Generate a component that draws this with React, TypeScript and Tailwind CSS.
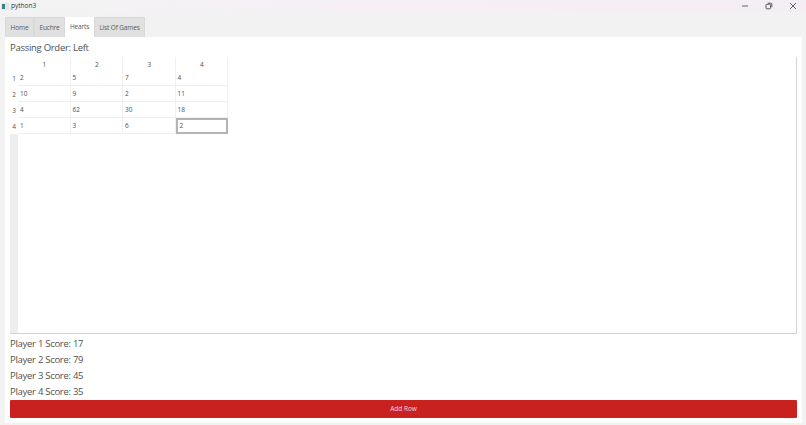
const cols = ["1", "2", "3", "4"];
const rows = [
  ["2", "5", "7", "4"],
  ["10", "9", "2", "11"],
  ["4", "62", "30", "18"],
  ["1", "3", "6", "2"],
];
const scores = [17, 79, 45, 35];
const heights = ["h-[15px]", "h-[16px]", "h-[16px]", "h-[16px]"];

function Tab({ label, active, w }: { label: string; active?: boolean; w: string }) {
  return (
    <div
      className={`${w} h-[20px] flex items-center justify-center text-[6.5px] tracking-[-0.15px] text-[#5a5a5a] ${
        active ? "bg-white" : "bg-[#e0e0e0] border border-b-0 border-[#d9d9d9]"
      }`}
    >
      {label}
    </div>
  );
}

export default function App() {
  return (
    <div className="w-[806px] h-[425px] overflow-hidden flex flex-col bg-[#f2f2f2] font-['Open_Sans','Noto_Sans',sans-serif] text-[#505050]">
      <div className="h-[12px] flex items-center bg-gradient-to-r from-[#f3f3f3] via-[#f6eff6] to-[#f4eef4] relative">
        <svg width="8" height="7" viewBox="0 0 8 7" className="ml-[1px] shrink-0">
          <rect width="8" height="7" fill="#dfe6e6" />
          <rect x="1" y="1" width="3" height="5" fill="#3f7f86" />
        </svg>
        <span className="ml-[2px] text-[6.5px] text-[#333333] leading-none">python3</span>
        <div className="ml-auto flex items-center text-[#555555]">
          <svg width="8" height="8" viewBox="0 0 8 8" className="mr-[16px]">
            <path d="M1 4h6" stroke="currentColor" strokeWidth="0.9" />
          </svg>
          <svg width="8" height="8" viewBox="0 0 8 8" className="mr-[16px]">
            <rect x="1" y="2.2" width="4.6" height="4.6" rx="1" fill="none" stroke="currentColor" strokeWidth="1" />
            <path d="M2.8 1.2h3a1 1 0 0 1 1 1v3" fill="none" stroke="currentColor" strokeWidth="1" />
          </svg>
          <svg width="8" height="8" viewBox="0 0 8 8" className="mr-[9px]">
            <path d="M1 1l6 6M7 1l-6 6" stroke="currentColor" strokeWidth="0.9" />
          </svg>
        </div>
      </div>

      <div className="flex pl-[5px] pt-[5px]">
        <Tab label="Home" w="w-[29px]" />
        <Tab label="Euchre" w="w-[31px]" />
        <Tab label="Hearts" active w="w-[29px]" />
        <Tab label="List Of Games" w="w-[51px]" />
      </div>

      <div className="ml-[5px] mr-[4px] h-[386px] bg-white flex flex-col px-[5px]">
        <div className="h-[20px] flex items-center text-[9.5px] tracking-[-0.28px] leading-none pt-[2px]">Passing Order: Left</div>

        <div className="h-[277px] w-[787px] border-r border-b border-[#d4d4d4] flex flex-col">
          <div className="flex h-[14px] text-[6.5px]">
            <div className="w-[8px]" />
            {cols.map((c) => (
              <div key={c} className="w-[52.5px] flex items-center justify-center pt-[1px] pl-[1px] border-r border-[#f0f0f0]">
                {c}
              </div>
            ))}
          </div>
          {rows.map((r, i) => (
            <div key={i} className={`flex text-[6.5px] ${heights[i]}`}>
              <div className="w-[8px] flex items-center justify-center pt-[1px]">{i + 1}</div>
              {r.map((v, j) => {
                const selected = i === 3 && j === 3;
                return (
                  <div
                    key={j}
                    className={`w-[52.5px] flex items-center pl-[2px] ${
                      selected
                        ? "border-2 border-[#b4b4b4]"
                        : "border-r border-b border-[#f0f0f0]"
                    }`}
                  >
                    {v}
                  </div>
                );
              })}
            </div>
          ))}
          <div className="w-[8px] flex-1 bg-[#eeeeee]" />
        </div>

        <div className="flex flex-col mt-[2px]">
          {scores.map((s, i) => (
            <div key={i} className="h-[16px] flex items-center text-[9.5px] tracking-[-0.28px] leading-none">
              Player {i + 1} Score: {s}
            </div>
          ))}
        </div>

        <div className="mt-[0px] w-[787px] h-[18px] bg-[#c92020] rounded-[1px] flex items-center justify-center text-[6.5px] text-[#f5dcdc]">
          Add Row
        </div>
      </div>
    </div>
  );
}
